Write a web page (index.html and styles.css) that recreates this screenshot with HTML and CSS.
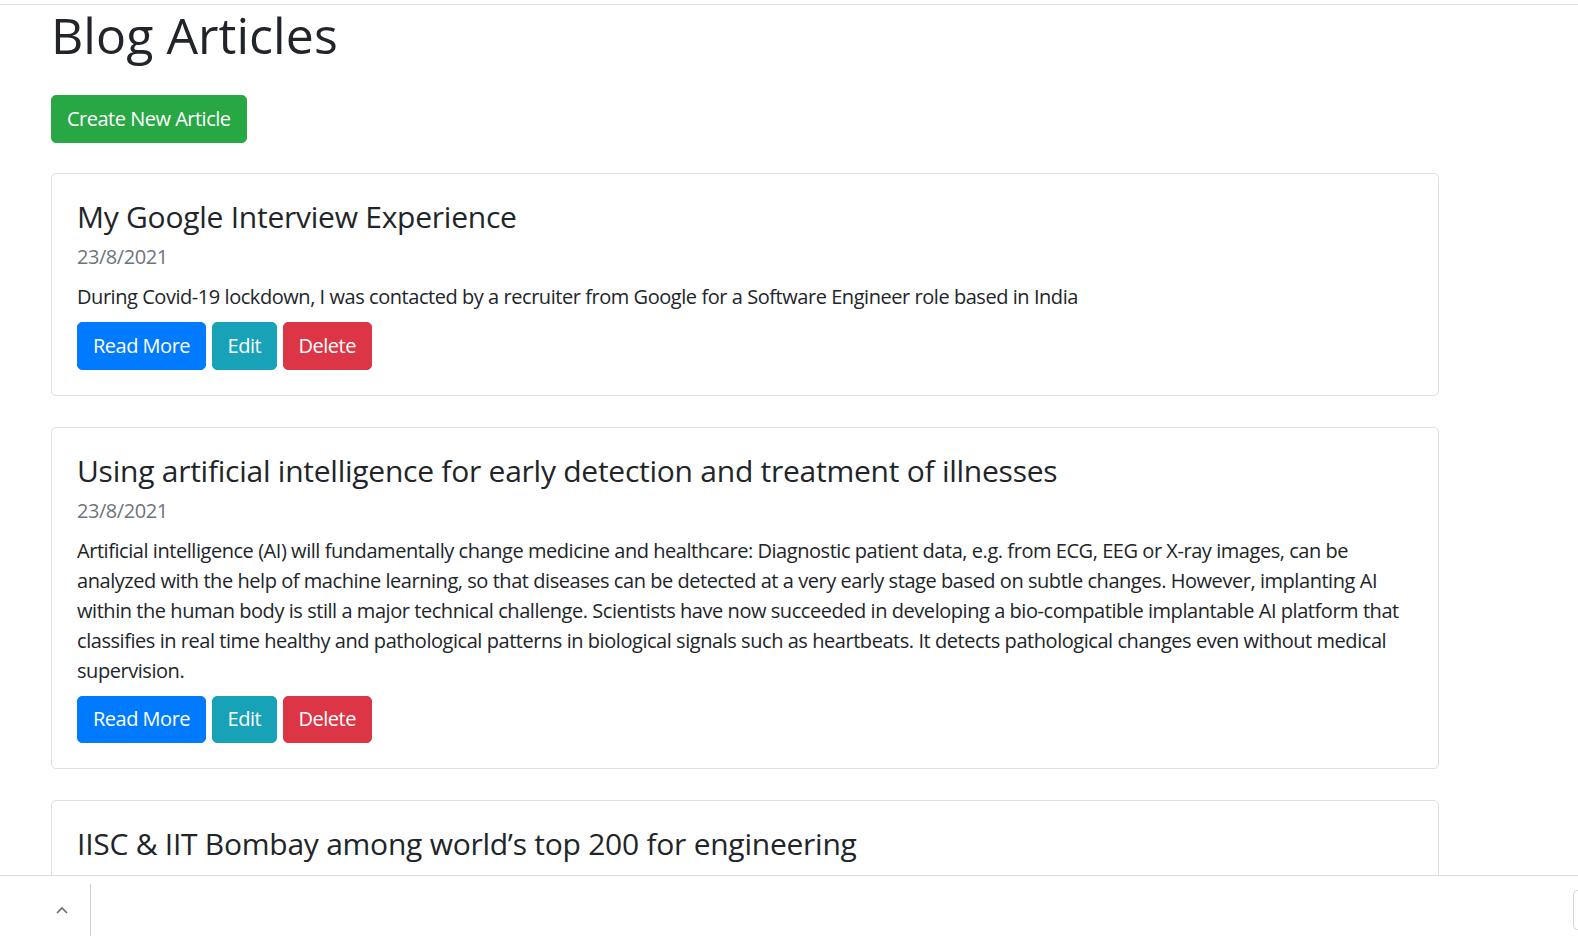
FILE: index.html
```html
<!DOCTYPE html>
<html lang="en">
<head>
<meta charset="utf-8">
<title>Blog Articles</title>
<link rel="stylesheet" href="styles.css">
</head>
<body>
<div class="page">
  <main class="content">
    <div class="topline"></div>
    <div class="container">
      <h1 class="page-title">Blog Articles</h1>
      <div class="actions">
        <a class="btn btn-success" href="#">Create New Article</a>
      </div>

      <article class="card">
        <h4 class="card-title">My Google Interview Experience</h4>
        <div class="card-date">23/8/2021</div>
        <p class="card-text">During Covid-19 lockdown, I was contacted by a recruiter from Google for a Software Engineer role based in India</p>
        <div class="btn-row">
          <a class="btn btn-primary" href="#">Read More</a>
          <a class="btn btn-info" href="#">Edit</a>
          <a class="btn btn-danger" href="#">Delete</a>
        </div>
      </article>

      <article class="card">
        <h4 class="card-title">Using artificial intelligence for early detection and treatment of illnesses</h4>
        <div class="card-date">23/8/2021</div>
        <p class="card-text">Artificial intelligence (AI) will fundamentally change medicine and healthcare: Diagnostic patient data, e.g. from ECG, EEG or X-ray images, can be analyzed with the help of machine learning, so that diseases can be detected at a very early stage based on subtle changes. However, implanting AI within the human body is still a major technical challenge. Scientists have now succeeded in developing a bio-compatible implantable AI platform that classifies in real time healthy and pathological patterns in biological signals such as heartbeats. It detects pathological changes even without medical supervision.</p>
        <div class="btn-row">
          <a class="btn btn-primary" href="#">Read More</a>
          <a class="btn btn-info" href="#">Edit</a>
          <a class="btn btn-danger" href="#">Delete</a>
        </div>
      </article>

      <article class="card">
        <h4 class="card-title">IISC &amp; IIT Bombay among world’s top 200 for engineering</h4>
        <div class="card-date">23/8/2021</div>
        <p class="card-text">The Indian Institute of Science and IIT Bombay have been ranked among the world’s top 200 institutions for engineering.</p>
        <div class="btn-row">
          <a class="btn btn-primary" href="#">Read More</a>
          <a class="btn btn-info" href="#">Edit</a>
          <a class="btn btn-danger" href="#">Delete</a>
        </div>
      </article>
    </div>
  </main>
  <footer class="bottom-bar">
    <div class="bar-toggle">
      <svg class="chevron" width="12" height="8" viewBox="0 0 12 8" aria-hidden="true">
        <path d="M1 7 L6 2 L11 7" fill="none" stroke="#6b6b6b" stroke-width="1.6"/>
      </svg>
    </div>
    <div class="bar-fill"></div>
    <div class="bar-edge"></div>
  </footer>
</div>
</body>
</html>
```
FILE: styles.css
```css
html, body {
  margin: 0;
  padding: 0;
  height: 100%;
  background: #fff;
}

body {
  font-family: "Open Sans", "Noto Sans", "Liberation Sans", sans-serif;
  color: #212529;
  font-size: 20px;
  line-height: 30px;
}

.page {
  height: 100vh;
  display: flex;
  flex-direction: column;
  overflow: hidden;
}

.topline {
  height: 4px;
  border-bottom: 1px solid #dee2e6;
}

.content {
  flex: 1;
  overflow: hidden;
}

.container {
  width: 1387.5px;
  margin-left: 51px;
}

.page-title {
  margin: 0 0 30px;
  font-size: 50px;
  line-height: 60px;
  font-weight: 500;
  letter-spacing: 0.05px;
}

.actions {
  margin-bottom: 30.5px;
}

.btn {
  display: inline-block;
  box-sizing: border-box;
  height: 47.5px;
  padding: 7.5px 15px;
  border: 1px solid transparent;
  border-radius: 5px;
  font-size: 20px;
  line-height: 30px;
  color: #fff;
  text-decoration: none;
  letter-spacing: -0.5px;
}

.btn-success { background: #28a745; border-color: #28a745; }
.btn-primary { background: #007bff; border-color: #007bff; }
.btn-info    { background: #17a2b8; border-color: #17a2b8; }
.btn-danger  { background: #dc3545; border-color: #dc3545; }

.card {
  border: 1px solid rgba(0, 0, 0, 0.125);
  border-radius: 5px;
  padding: 25px;
  margin-bottom: 31px;
}

.card-title {
  margin: 0 0 7px;
  font-size: 30px;
  line-height: 36px;
  font-weight: 500;
  letter-spacing: -0.25px;
}

.card-date {
  color: #6c757d;
  font-size: 20px;
  line-height: 30px;
  margin-bottom: 10px;
  letter-spacing: -0.45px;
}

.card-text {
  margin: 0;
  font-size: 20px;
  line-height: 30px;
  letter-spacing: -0.45px;
}

.btn-row {
  display: flex;
  gap: 5.5px;
  margin-top: 10px;
}

.bottom-bar {
  flex: none;
  height: 60px;
  border-top: 1px solid #dadce0;
  display: flex;
  align-items: flex-end;
  background: #fff;
}

.bar-toggle {
  width: 91px;
  height: 52px;
  border-right: 1px solid #d0d0d0;
  display: flex;
  align-items: center;
  box-sizing: border-box;
  justify-content: flex-end;
}

.chevron {
  margin-right: 22px;
}

.bar-fill {
  flex: 1;
}

.bar-edge {
  width: 5px;
  height: 40px;
  margin-bottom: 6px;
  border: 1px solid #d6d6d6;
  border-right: none;
  border-radius: 6px 0 0 6px;
  box-sizing: border-box;
}
```
